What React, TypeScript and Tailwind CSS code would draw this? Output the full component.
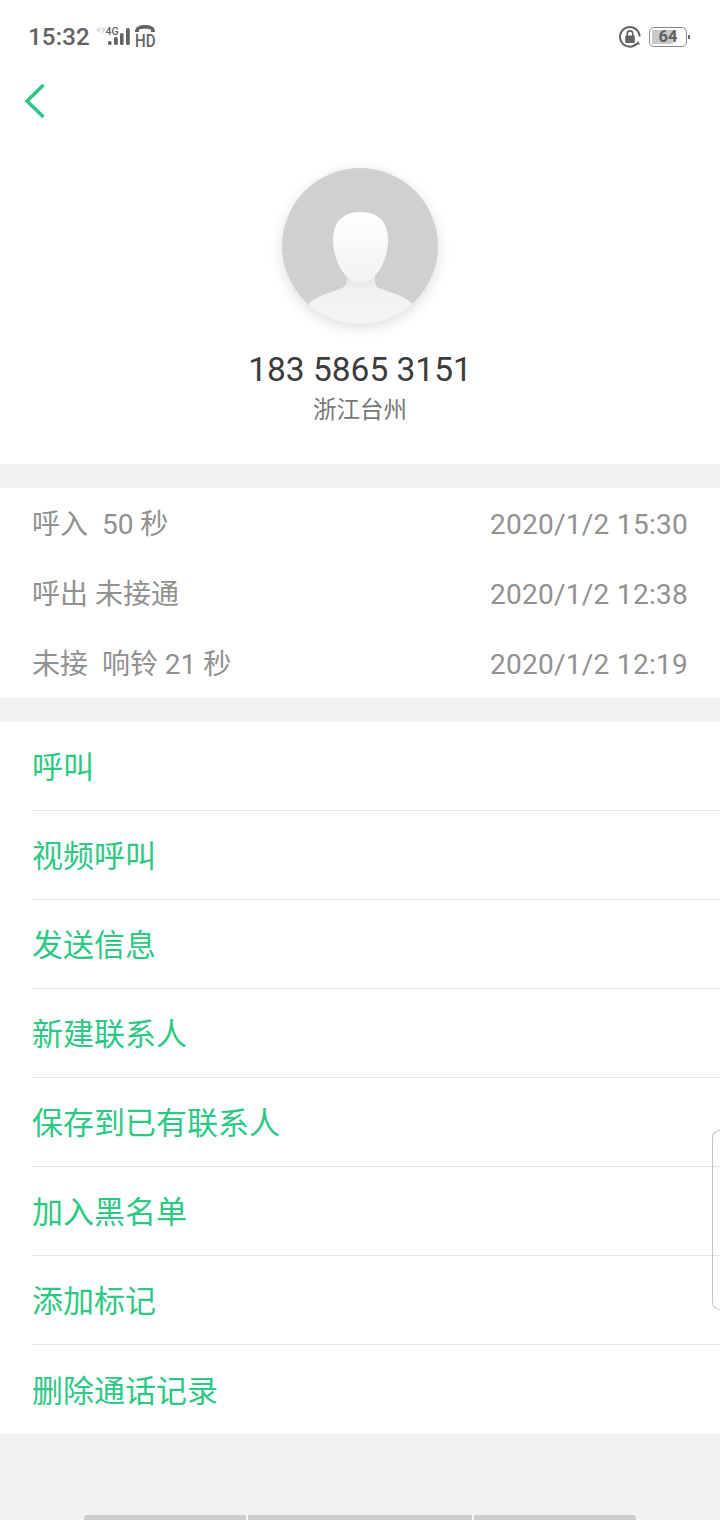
const FONT = "font-['Roboto','Noto_Sans_CJK_SC',sans-serif]";

function Avatar() {
  return (
    <div className="relative w-[156px] h-[156px] rounded-full shadow-[0_4px_14px_rgba(0,0,0,0.13)]">
      <svg width="156" height="156" viewBox="0 0 156 156">
        <defs>
          <clipPath id="c"><circle cx="78" cy="78" r="78" /></clipPath>
          <linearGradient id="f" x1="0" y1="0" x2="0" y2="1">
            <stop offset="0" stopColor="#ffffff" />
            <stop offset="0.5" stopColor="#f8f8f8" />
            <stop offset="1" stopColor="#f2f2f2" />
          </linearGradient>
          <linearGradient id="n" x1="0" y1="0" x2="0" y2="1">
            <stop offset="0.28" stopColor="#e8e8e8" />
            <stop offset="0.42" stopColor="#f2f2f2" />
            <stop offset="1" stopColor="#f5f5f5" />
          </linearGradient>
        </defs>
        <circle cx="78" cy="78" r="78" fill="#d0d0d0" />
        <g clipPath="url(#c)">
          <path d="M65 96 C65 112 66 117 60 120 C50 124 37 127 27 135 L27 160 L130 160 L130 135 C120 127 107 124 97 120 C92 117 93 112 93 96 Z" fill="url(#n)" />
          <path d="M78.5 44 C60 44 51 55 51 72 C51 92 63 115 78.5 115 C94 115 106 92 106 72 C106 55 97 44 78.5 44 Z" fill="url(#f)" />
        </g>
      </svg>
    </div>
  );
}

function StatusBar() {
  return (
    <div className="h-[72px] flex items-center justify-between pl-[28px] pr-[30px] pt-[2px]">
      <div className="flex items-center text-[#636363]">
        <span className="text-[24px] font-medium leading-none tracking-[0.2px]">15:32</span>
        <svg width="68" height="30" viewBox="0 0 68 30" className="ml-[5px]">
          <path d="M4.5 5 L1.5 8 L4.5 11 Z M6 3 V12 M7.5 5 L10.5 8 L7.5 11 Z" fill="#d8d8d8" stroke="#d8d8d8" strokeWidth="0.5" />
          <text x="10.5" y="13" fontSize="10.5" fontWeight="500" fill="#636363" fontFamily="Roboto">4G</text>
          <rect x="13" y="19" width="3.6" height="4" rx="1.6" fill="#636363" />
          <rect x="19" y="15" width="3.8" height="8" rx="1.6" fill="#636363" />
          <rect x="25" y="11" width="3.6" height="12" rx="1.6" fill="#636363" />
          <rect x="31" y="6" width="3.8" height="17" rx="1.6" fill="#636363" />
          <path d="M40 10 C40 4.5 45 3 50 3 C55 3 60 4.5 60 10 L56 10 L56 7.5 C54 6.5 46 6.5 44 7.5 L44 10 Z" fill="#636363" />
          <text x="40" y="25" fontSize="19" fontWeight="500" fill="#636363" fontFamily="Roboto" textLength="20.5" lengthAdjust="spacingAndGlyphs">HD</text>
        </svg>
      </div>
      <div className="flex items-center">
        <svg width="24" height="24" viewBox="0 0 24 24">
          <path d="M19 18.5 A9.8 9.8 0 1 1 21.6 11.5" fill="none" stroke="#636363" strokeWidth="2" />
          <path d="M20 16 L22 19.5 L18 19.5 Z" fill="#636363" />
          <rect x="7.2" y="10.5" width="9.6" height="7.5" rx="1" fill="#636363" />
          <path d="M9.2 11 V8.7 A2.8 2.8 0 0 1 14.8 8.7 V11" fill="none" stroke="#636363" strokeWidth="1.6" />
        </svg>
        <div className="relative ml-[7px] w-[38px] h-[20px] rounded-[5px] border border-[#8a8a8a] p-[2px]">
          <div className="h-full w-[66%] rounded-[1px] bg-[#c9c9c9]" />
          <span className="absolute inset-0 flex items-center justify-center text-[16.5px] font-bold leading-none text-[#5f5f5f]">64</span>
        </div>
        <div className="ml-[1px] w-[2px] h-[4px] bg-[#6a6a6a]" />
      </div>
    </div>
  );
}

const calls = [
  ["呼入  50 秒", "2020/1/2 15:30"],
  ["呼出 未接通", "2020/1/2 12:38"],
  ["未接  响铃 21 秒", "2020/1/2 12:19"],
];

const actions = ["呼叫", "视频呼叫", "发送信息", "新建联系人", "保存到已有联系人", "加入黑名单", "添加标记", "删除通话记录"];

export default function App() {
  return (
    <div className={`relative w-[720px] h-[1520px] overflow-hidden bg-[#f2f2f2] ${FONT}`}>
      <div className="bg-white h-[464px]">
        <StatusBar />
        <div className="h-[58px] pl-[24px] flex items-center">
          <svg width="22" height="36" viewBox="0 0 22 36">
            <path d="M19.5 2 L3 18 L19.5 34" fill="none" stroke="#2dc884" strokeWidth="3.6" />
          </svg>
        </div>
        <div className="flex flex-col items-center pt-[38px]">
          <Avatar />
          <div className="mt-[25px] text-[33.5px] leading-[42px] text-[#3c3c3c]">183 5865 3151</div>
          <div className="mt-[3px] text-[23.5px] leading-[32px] text-[#777777]">浙江台州</div>
        </div>
      </div>

      <div className="mt-[24px] bg-white">
        {calls.map(([l, r]) => (
          <div key={r} className="h-[70px] pl-[32px] pr-[32px] pt-[4px] flex items-center justify-between text-[#919191]">
            <span className="text-[28px] whitespace-pre">{l}</span>
            <span className="text-[28px] tracking-[0.28px]">{r}</span>
          </div>
        ))}
      </div>

      <div className="mt-[24px] bg-white pl-[32px]">
        {actions.map((a, i) => (
          <div key={a} className={`h-[89px] pt-[5px] flex items-center text-[31px] text-[#2dc884] ${i < actions.length - 1 ? "border-b border-[#e8e8e8]" : ""}`}>
            {a}
          </div>
        ))}
      </div>

      <div className="absolute right-0 top-[1130px] w-[8px] h-[180px] rounded-l-[8px] border border-r-0 border-[#c4c4c4]" />

      <div className="absolute bottom-0 left-[84px] flex gap-[2px] h-[5px]">
        <div className="w-[162px] bg-[#cccccc] rounded-tl-[3px]" />
        <div className="w-[224px] bg-[#cccccc]" />
        <div className="w-[162px] bg-[#cccccc] rounded-tr-[3px]" />
      </div>
    </div>
  );
}
